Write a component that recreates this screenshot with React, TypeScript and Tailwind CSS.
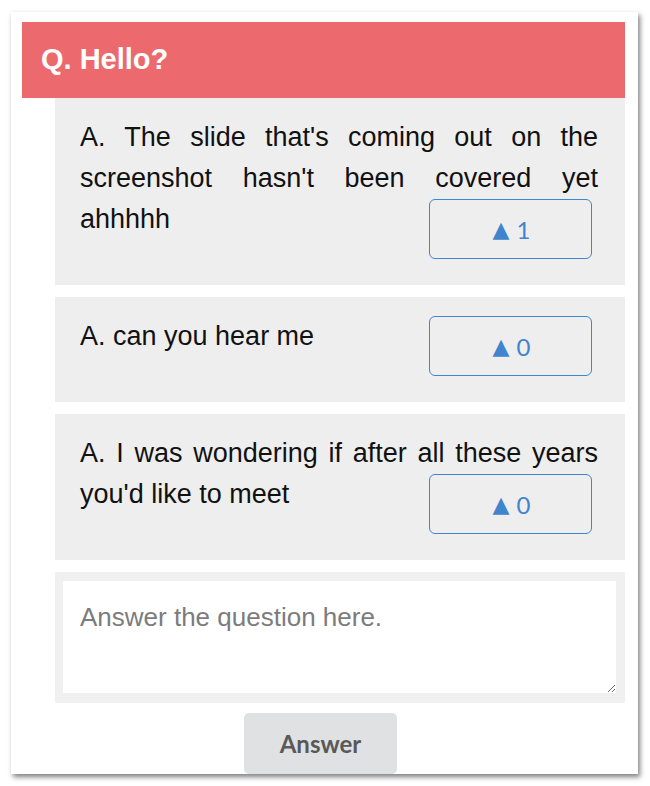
const answers = [
  { text: "A. The slide that's coming out on the screenshot hasn't been covered yet ahhhhh", votes: 1 },
  { text: "A. can you hear me", votes: 0 },
  { text: "A. I was wondering if after all these years you'd like to meet", votes: 0 },
];

function VoteButton({ votes }: { votes: number }) {
  return (
    <button className="float-right mr-[6px] flex h-[60px] w-[163px] items-center justify-center gap-[7px] rounded-[6px] border-[1.5px] border-[#3f86d0] bg-transparent pl-[2px] font-['Lato','DejaVu_Sans',sans-serif] text-[24px] text-[#3f84cc]">
      <span className="font-['DejaVu_Sans',sans-serif] text-[22px]">▲</span>
      <span>{votes}</span>
    </button>
  );
}

export default function App() {
  return (
    <div className="min-h-screen bg-white pt-[12px] pl-[11px]">
      <div className="w-[627px] overflow-hidden bg-white pt-[10px] pl-[11px] pr-[13px] shadow-[2px_3px_5px_rgba(0,0,0,0.5)]">
        <div className="flex h-[76px] items-center bg-[#ec6a6e] pl-[19px] font-['Liberation_Sans',Arial,sans-serif] text-[29px] font-bold text-white">
          Q. Hello?
        </div>

        <div className="ml-[33px] flex flex-col gap-[12px]">
          {answers.map((a, i) => (
            <div
              key={i}
              className="flow-root bg-[#eeeeee] pt-[19px] pb-[26px] pl-[25px] pr-[27px] text-justify font-['Liberation_Sans',Arial,sans-serif] text-[27px] leading-[41px] text-[#111]"
            >
              {a.text}
              <VoteButton votes={a.votes} />
            </div>
          ))}

          <div className="bg-[#f0f0f0] pt-[9px] pb-[10px] pl-[8px] pr-[9px]">
            <textarea
              placeholder="Answer the question here."
              className="block h-[112px] w-full bg-white pt-[18px] pl-[17px] font-['Liberation_Sans',Arial,sans-serif] text-[26px] leading-[36px] text-[#222] outline-none placeholder:text-[#7c7c7c]"
            />
          </div>
        </div>

        <div className="mt-[10px] mr-[6px] flex justify-center">
          <button className="h-[61px] w-[153px] rounded-[5px] bg-[#e0e1e2] font-['Lato',sans-serif] text-[24px] font-bold text-[#595959]">
            Answer
          </button>
        </div>
      </div>
    </div>
  );
}
